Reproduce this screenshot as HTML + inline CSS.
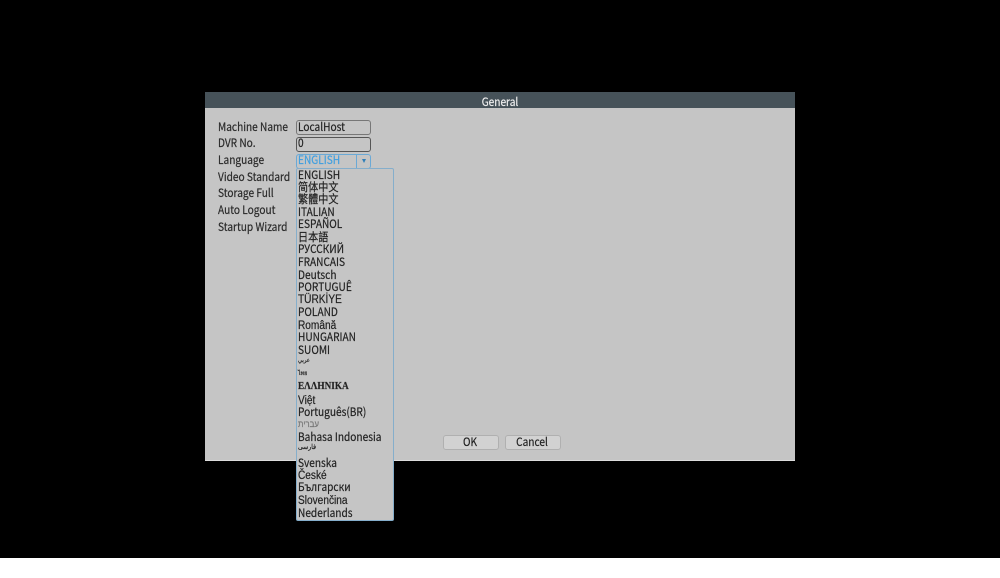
<!DOCTYPE html>
<html><head><meta charset="utf-8">
<style>
html,body{margin:0;padding:0;background:#fff;}
#s{position:relative;width:1000px;height:578px;overflow:hidden;background:#fff;font-family:"Noto Sans CJK SC","Liberation Sans",sans-serif;}
#s div{position:absolute;box-sizing:border-box;}
.t{font-size:11.5px;line-height:14px;color:#222;white-space:nowrap;-webkit-text-stroke:.2px currentColor;transform:translateY(-1px) scaleX(.88);transform-origin:0 50%;}
.c{text-align:center;transform-origin:50% 50%;}
.l{left:217.5px;color:#2a2a2a;}
.o{left:297.5px;color:#222;}
.b{width:56px;height:15px;background:#d2d2d2;border:1px solid #b0b0b0;border-radius:3px;top:435px;}
.x{font-family:"Liberation Sans",sans-serif;font-size:11.5px;transform:scaleX(.88);}
</style></head><body>
<div id="s">
<div style="left:0;top:0;width:1000px;height:558px;background:#000"></div>
<div style="left:205px;top:92px;width:590px;height:369px;background:#c5c5c5;border-bottom:1px solid #ddd"></div>
<div style="left:205px;top:92px;width:590px;height:16px;background:#465259"></div>
<div class="t c" style="left:205px;width:590px;top:96px;color:#eee">General</div>

<div class="t l" style="top:121px">Machine Name</div>
<div class="t l" style="top:137px">DVR No.</div>
<div class="t l" style="top:154px">Language</div>
<div class="t l" style="top:171px">Video Standard</div>
<div class="t l" style="top:187px">Storage Full</div>
<div class="t l" style="top:204px">Auto Logout</div>
<div class="t l" style="top:221px">Startup Wizard</div>

<div style="left:296px;top:120px;width:75px;height:15px;border:1px solid #777;border-radius:3px"></div>
<div class="t o" style="top:121px">LocalHost</div>
<div style="left:296px;top:137px;width:75px;height:15px;border:1px solid #555;border-radius:3px"></div>
<div class="t o" style="top:137px">0</div>
<div style="left:296px;top:154px;width:75px;height:15px;border:1px solid #6aa9d6;border-radius:3px"></div>
<div style="left:356px;top:154px;width:1px;height:15px;background:#6aa9d6"></div>
<div style="left:361.5px;top:159px;width:0;height:0;border-left:2.5px solid transparent;border-right:2.5px solid transparent;border-top:4px solid #2f7fb8"></div>
<div class="t o" style="top:154px;color:#3f9fe0">ENGLISH</div>

<div style="left:296px;top:168px;width:98px;height:353px;background:#c5c5c5;border:1px solid #85aecb;border-radius:2px"></div>
<div class="t o" style="top:169px">ENGLISH</div>
<div class="t o" style="top:181px">简体中文</div>
<div class="t o" style="top:193px">繁體中文</div>
<div class="t o" style="top:206px">ITALIAN</div>
<div class="t o" style="top:218px">ESPAÑOL</div>
<div class="t o" style="top:231px">日本語</div>
<div class="t o" style="top:243px">РУССКИЙ</div>
<div class="t o" style="top:256px">FRANCAIS</div>
<div class="t o" style="top:269px">Deutsch</div>
<div class="t o" style="top:281px">PORTUGUÊ</div>
<div class="t o x" style="top:293px">TÜRKİYE</div>
<div class="t o" style="top:306px">POLAND</div>
<div class="t o x" style="top:319px">Română</div>
<div class="t o" style="top:331px">HUNGARIAN</div>
<div class="t o" style="top:344px">SUOMI</div>
<div class="t o" style="top:354px;font-size:6px">عربي</div>
<div class="t o" style="top:367px;font-size:6px">ไทย</div>
<div class="t o" style="top:380px;font-family:'Liberation Serif',serif;font-size:10.5px;font-weight:bold;transform:scaleX(.88)">ΕΛΛΗΝΙΚΑ</div>
<div class="t o x" style="top:394px">Việt</div>
<div class="t o" style="top:406px">Português(BR)</div>
<div class="t o" style="top:418px;color:#777;font-size:9px">עברית</div>
<div class="t o" style="top:431px">Bahasa Indonesia</div>
<div class="t o" style="top:441px;font-size:7px">فارسی</div>
<div class="t o" style="top:457px">Svenska</div>
<div class="t o x" style="top:469px">České</div>
<div class="t o" style="top:481px">Български</div>
<div class="t o x" style="top:494px">Slovenčina</div>
<div class="t o" style="top:507px">Nederlands</div>

<div class="b" style="left:443px"></div>
<div class="b" style="left:505px"></div>
<div class="t c" style="left:442px;width:56px;top:436px">OK</div>
<div class="t c" style="left:504px;width:56px;top:436px">Cancel</div>
</div>
</body></html>
